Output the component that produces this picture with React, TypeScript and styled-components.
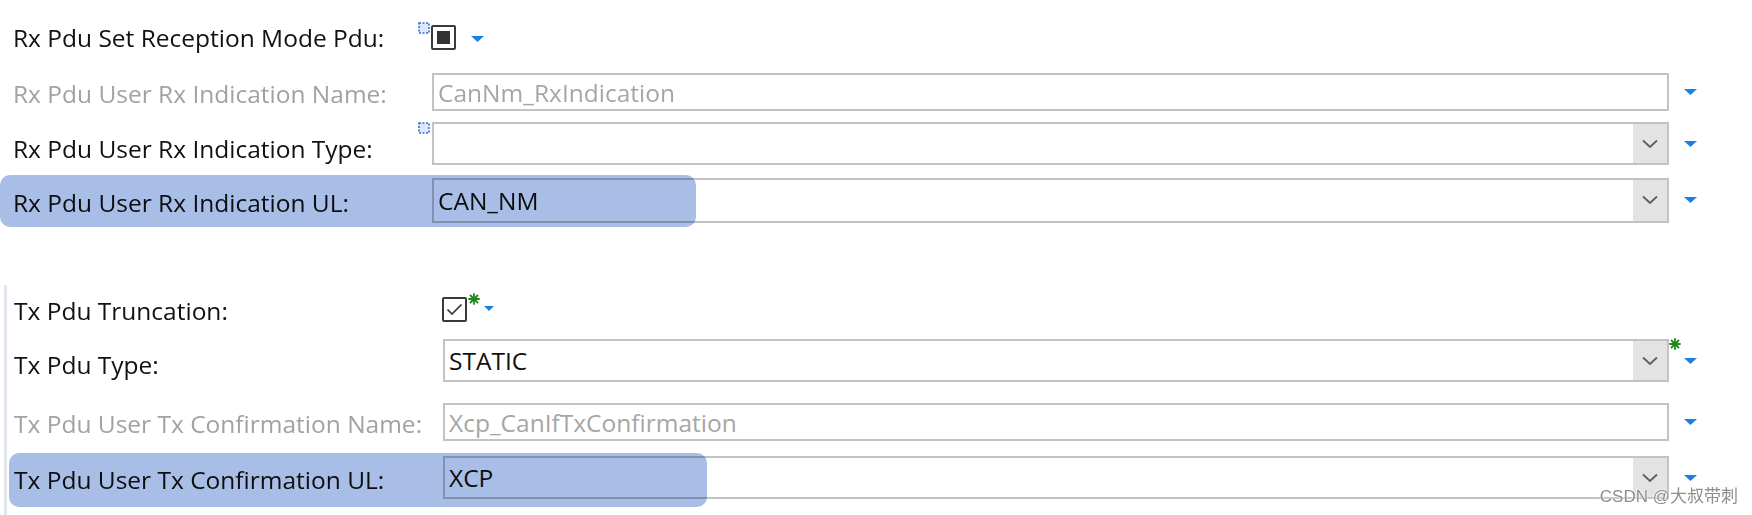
import React from "react";
import styled, { createGlobalStyle } from "styled-components";

const Global = createGlobalStyle`
  html, body { margin: 0; padding: 0; background: #fff; }
  body {
    width: 1752px; height: 515px; overflow: hidden;
    font-family: "Open Sans", "Noto Sans", sans-serif;
  }
`;

const Page = styled.div`
  position: relative;
  width: 1752px;
  height: 515px;
  box-sizing: border-box;
  padding-top: 12px;
  background: #fff;
  display: flex;
  flex-direction: column;
`;

const RxSection = styled.div`
  --label: 419px;
  --field: 1237px;
  display: flex;
  flex-direction: column;
  padding-left: 13px;
`;

const TxSection = styled.div`
  --label: 429px;
  --field: 1226px;
  display: flex;
  flex-direction: column;
  flex: 1;
  margin-top: 50px;
  margin-left: 4px;
  padding-left: 7px;
  border-left: 3px solid #e1e6ef;
`;

const Row = styled.div<{ $h: number }>`
  position: relative;
  display: grid;
  grid-template-columns: var(--label) var(--field) 1fr;
  align-items: center;
  height: ${(p) => p.$h}px;
`;

const Label = styled.div<{ $disabled?: boolean; $dy?: number }>`
  font-size: 24.5px;
  color: ${(p) => (p.$disabled ? "#a2a2a2" : "#111")};
  white-space: nowrap;
  padding-top: ${(p) => (p.$dy ?? 4)}px;
`;

const FieldCell = styled.div`
  position: relative;
  display: flex;
  align-items: center;
`;

const Box = styled.div<{ $h: number }>`
  position: relative;
  box-sizing: border-box;
  width: 100%;
  height: ${(p) => p.$h}px;
  border: 2px solid #c3c3c3;
  background: #fff;
  display: flex;
  align-items: stretch;
`;

const BoxText = styled.div<{ $disabled?: boolean }>`
  flex: 1;
  display: flex;
  align-items: center;
  padding-left: 4px;
  font-size: 24.5px;
  color: ${(p) => (p.$disabled ? "#a6a6a6" : "#111")};
  white-space: nowrap;
`;

const DropButton = styled.div`
  width: 34px;
  background: #e3e3e3;
  display: flex;
  align-items: center;
  justify-content: center;
`;

const MarkerCell = styled.div`
  display: flex;
  align-items: center;
  padding-left: 15px;
`;

const CheckGroup = styled.div<{ $shift: number }>`
  position: relative;
  display: flex;
  align-items: center;
  margin-left: ${(p) => p.$shift}px;
`;

const CheckBox = styled.div`
  box-sizing: border-box;
  width: 25px;
  height: 25px;
  border: 2px solid #3a3a3a;
  border-radius: 2px;
  background: #fff;
  display: flex;
  align-items: center;
  justify-content: center;
`;

const CheckFill = styled.div`
  width: 13px;
  height: 13px;
  background: #333;
`;

const Badge = styled.div<{ $left: number; $top: number }>`
  position: absolute;
  left: ${(p) => p.$left}px;
  top: ${(p) => p.$top}px;
  line-height: 0;
`;

const TriSlot = styled.div<{ $gap: number; $dy?: number }>`
  margin-left: ${(p) => p.$gap}px;
  line-height: 0;
  transform: translateY(${(p) => p.$dy ?? 0}px);
`;

const Highlight = styled.div<{ $left: number; $top: number; $w: number; $h: number }>`
  position: absolute;
  left: ${(p) => p.$left}px;
  top: ${(p) => p.$top}px;
  width: ${(p) => p.$w}px;
  height: ${(p) => p.$h}px;
  border-radius: 10px;
  background: #a9bee6;
  mix-blend-mode: multiply;
  pointer-events: none;
`;

const Watermark = styled.div`
  position: absolute;
  right: 14px;
  bottom: 8px;
  font-family: "Liberation Sans", "Noto Sans CJK SC", sans-serif;
  font-size: 17px;
  color: #8e8e8e;
  text-shadow: 0 0 2px #fff, 0 0 2px #fff;
  white-space: nowrap;
`;

const Triangle = ({ w = 13, h = 6 }: { w?: number; h?: number }) => (
  <svg width={w} height={h} viewBox={`0 0 ${w} ${h}`}>
    <polygon points={`0,0 ${w},0 ${w / 2},${h}`} fill="#1e7fdc" />
  </svg>
);

const Chevron = () => (
  <svg width="16" height="10" viewBox="0 0 16 10">
    <polyline points="1,1.5 8,8 15,1.5" fill="none" stroke="#5e5e5e" strokeWidth="1.8" />
  </svg>
);

const DottedIcon = () => (
  <svg width="12" height="12" viewBox="0 0 12 12">
    <rect x="1" y="1" width="10" height="10" fill="#dce9fb" stroke="#2f6fd0" strokeWidth="1.6" strokeDasharray="2 1.5" />
  </svg>
);

const Asterisk = () => (
  <svg width="12" height="12" viewBox="0 0 12 12">
    <g stroke="#1c8a1c" strokeWidth="1.8" strokeLinecap="round">
      <line x1="6" y1="1" x2="6" y2="11" />
      <line x1="1" y1="6" x2="11" y2="6" />
      <line x1="2.5" y1="2.5" x2="9.5" y2="9.5" />
      <line x1="9.5" y1="2.5" x2="2.5" y2="9.5" />
    </g>
  </svg>
);

const CheckMark = () => (
  <svg width="17" height="13" viewBox="0 0 17 13">
    <polyline points="1.5,6.5 6,11 15.5,1.5" fill="none" stroke="#3a3a3a" strokeWidth="1.7" />
  </svg>
);

const TextBox = ({ h, value, disabled }: { h: number; value: string; disabled?: boolean }) => (
  <Box $h={h}>
    <BoxText $disabled={disabled}>{value}</BoxText>
  </Box>
);

const Combo = ({ h, value, children }: { h: number; value: string; children?: React.ReactNode }) => (
  <Box $h={h}>
    <BoxText>{value}</BoxText>
    <DropButton>
      <Chevron />
    </DropButton>
    {children}
  </Box>
);

export default function App() {
  return (
    <Page>
      <Global />
      <RxSection>
        <Row $h={50}>
          <Label $dy={0}>Rx Pdu Set Reception Mode Pdu:</Label>
          <FieldCell>
            <CheckGroup $shift={-1}>
              <Badge $left={-13} $top={-3}>
                <DottedIcon />
              </Badge>
              <CheckBox>
                <CheckFill />
              </CheckBox>
              <TriSlot $gap={15} $dy={2}>
                <Triangle />
              </TriSlot>
            </CheckGroup>
          </FieldCell>
        </Row>
        <Row $h={60}>
          <Label $disabled $dy={2}>Rx Pdu User Rx Indication Name:</Label>
          <FieldCell>
            <TextBox h={38} value="CanNm_RxIndication" disabled />
          </FieldCell>
          <MarkerCell>
            <Triangle />
          </MarkerCell>
        </Row>
        <Row $h={43}>
          <Label $dy={9}>Rx Pdu User Rx Indication Type:</Label>
          <FieldCell>
            <Badge $left={-14} $top={0}>
              <DottedIcon />
            </Badge>
            <Combo h={43} value="" />
          </FieldCell>
          <MarkerCell>
            <Triangle />
          </MarkerCell>
        </Row>
        <Row $h={70}>
          <Label>Rx Pdu User Rx Indication UL:</Label>
          <FieldCell>
            <Combo h={45} value="CAN_NM" />
          </FieldCell>
          <MarkerCell>
            <Triangle />
          </MarkerCell>
          <Highlight $left={-13} $top={10} $w={696} $h={52} />
        </Row>
      </RxSection>

      <TxSection>
        <Row $h={48}>
          <Label $dy={3}>Tx Pdu Truncation:</Label>
          <FieldCell>
            <CheckGroup $shift={-1}>
              <CheckBox>
                <CheckMark />
              </CheckBox>
              <Badge $left={26} $top={-4}>
                <Asterisk />
              </Badge>
              <TriSlot $gap={17} $dy={-1}>
                <Triangle w={10} h={5} />
              </TriSlot>
            </CheckGroup>
          </FieldCell>
        </Row>
        <Row $h={55}>
          <Label $dy={7}>Tx Pdu Type:</Label>
          <FieldCell>
            <Combo h={43} value="STATIC">
              <Badge $left={1224} $top={-3}>
                <Asterisk />
              </Badge>
            </Combo>
          </FieldCell>
          <MarkerCell>
            <Triangle />
          </MarkerCell>
        </Row>
        <Row $h={68}>
          <Label $disabled $dy={3}>Tx Pdu User Tx Confirmation Name:</Label>
          <FieldCell>
            <TextBox h={38} value="Xcp_CanIfTxConfirmation" disabled />
          </FieldCell>
          <MarkerCell>
            <Triangle />
          </MarkerCell>
        </Row>
        <Row $h={35}>
          <Label $dy={3}>Tx Pdu User Tx Confirmation UL:</Label>
          <FieldCell>
            <Combo h={43} value="XCP" />
          </FieldCell>
          <MarkerCell>
            <Triangle />
          </MarkerCell>
          <Highlight $left={-5} $top={-3} $w={698} $h={54} />
        </Row>
      </TxSection>

      <Watermark>CSDN @大叔带刺</Watermark>
    </Page>
  );
}
